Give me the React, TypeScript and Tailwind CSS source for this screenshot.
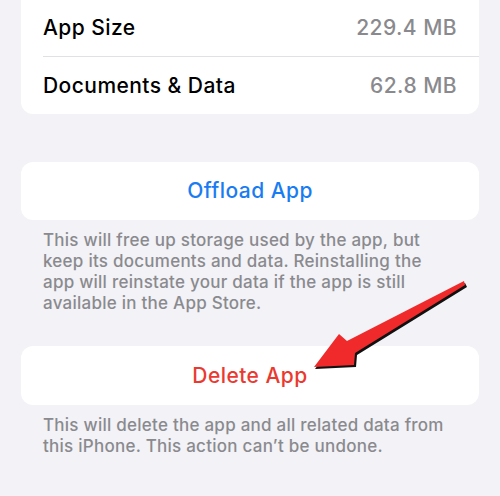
import React from "react";

export default function App() {
  return (
    <div
      className="relative w-[500px] h-[496px] overflow-hidden bg-[#f2f2f7]"
      style={{ fontFamily: "Inter, 'Noto Sans', sans-serif" }}
    >
      <div className="flex flex-col px-[21px]">
        <div className="-mt-[1px] rounded-b-[12px] bg-white">
          <div className="flex h-[57px] items-center justify-between pl-[22px] pr-[22px]">
            <span className="text-[21px] font-medium tracking-[0.45px] text-black">App Size</span>
            <span className="text-[21px] font-medium tracking-[0.45px] text-[#8a8a8e]">229.4 MB</span>
          </div>
          <div className="ml-[22px] h-px bg-[#e0e0e5]" />
          <div className="flex h-[57px] items-center justify-between pl-[22px] pr-[22px]">
            <span className="text-[21px] font-medium tracking-[0.45px] text-black">Documents &amp; Data</span>
            <span className="text-[21px] font-medium tracking-[0.45px] text-[#8a8a8e]">62.8 MB</span>
          </div>
        </div>

        <div className="mt-[48px] flex h-[58px] items-center justify-center rounded-[12px] bg-white">
          <span className="text-[21px] font-medium tracking-[0.45px] text-[#1a7cf2]">Offload App</span>
        </div>
        <p className="mt-[10px] px-[22px] text-[17px] leading-[21px] font-medium tracking-[0.25px] text-[#8a8a8e]">
          This will free up storage used by the app, but keep its documents and data. Reinstalling the
          app will reinstate your data if the app is still available in the App Store.
        </p>

        <div className="mt-[32px] flex h-[59px] items-center justify-center rounded-[12px] bg-white">
          <span className="text-[21px] font-medium tracking-[0.45px] text-[#ea3a30]">Delete App</span>
        </div>
        <p className="mt-[10px] px-[22px] text-[17px] leading-[21px] font-medium tracking-[0.25px] text-[#8a8a8e]">
          This will delete the app and all related data from this iPhone. This action can’t be undone.
        </p>
      </div>

      <svg
        className="pointer-events-none absolute inset-0"
        width="500"
        height="496"
        viewBox="0 0 500 496"
      >
        <polygon
          points="315,369 340,336 348,343 465,283 467,287 357,355 356,367"
          fill="#111"
        />
        <polygon
          points="314,367 339,334 347,341 464,281 465,285 355,353 354,365"
          fill="#f02a2a"
        />
      </svg>
    </div>
  );
}
